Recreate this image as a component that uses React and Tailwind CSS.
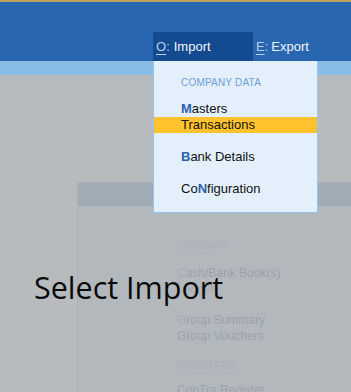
import React from "react";

export default function App() {
  return (
    <div
      className="relative w-[351px] h-[392px] overflow-hidden bg-[#b8bbbe] flex flex-col"
      style={{ fontFamily: '"Liberation Sans", Arial, sans-serif' }}
    >
      {/* top gold line */}
      <div className="h-[2px] shrink-0 bg-[#c0a35e]" />
      {/* header */}
      <div className="h-[59px] shrink-0 bg-[#2966b0] flex items-end pl-[153px]">
        <div className="w-[100px] h-[29px] bg-[#144a8f] flex items-center pl-[3px] text-[13px]">
          <span className="text-[#b8d0ec] underline underline-offset-[3px] decoration-[#b8d0ec]">O</span>
          <span className="text-[#b8d0ec]">:</span>
          <span className="text-[#f2f6fb] ml-[4px]">Import</span>
        </div>
        <div className="h-[29px] flex items-center pl-[3px] text-[13px]">
          <span className="text-[#b8d0ec] underline underline-offset-[3px] decoration-[#b8d0ec]">E</span>
          <span className="text-[#b8d0ec]">:</span>
          <span className="text-[#f2f6fb] ml-[3px]">Export</span>
        </div>
      </div>
      {/* light bar */}
      <div className="h-[14px] shrink-0 bg-[#89bde6]" />
      {/* background area */}
      <div className="flex-1 min-h-0 pt-[107px] pl-[77px]">
        <div className="h-[400px] border-l border-t border-[#aab2b9] bg-[#b3b8bd] flex flex-col">
          <div className="h-[23px] bg-[#a1acb7] shrink-0" />
          <div className="pl-[99px] pt-[33px] flex flex-col">
            <div className="h-[14px] leading-[14px] text-[10px] text-[#a9b1b8]">SUMMARY</div>
            <div className="mt-[12px] h-[16px] leading-[16px] text-[12px] text-[#9ba2a9]">
              <span className="text-[#a3adb8]">C</span>ash/Bank Book(s)
            </div>
            <div className="h-[16px] leading-[16px] text-[12px] text-[#a4abb2]">
              <span className="text-[#abb4be]">L</span>edger
            </div>
            <div className="mt-[15px] h-[16px] leading-[16px] text-[12px] text-[#9ba2a9]">
              <span className="text-[#a3adb8]">G</span>roup Summary
            </div>
            <div className="h-[16px] leading-[16px] text-[12px] text-[#9ba2a9]">
              Group <span className="text-[#97a6b8]">V</span>ouchers
            </div>
            <div className="mt-[15px] h-[14px] leading-[14px] text-[10px] text-[#a9b1b8]">REGISTERS</div>
            <div className="mt-[9px] h-[16px] leading-[16px] text-[12px] text-[#9ba2a9]">
              Con<span className="text-[#97a6b8]">T</span>ra Register
            </div>
          </div>
        </div>
      </div>

      {/* Select Import overlay text */}
      <div
        className="absolute left-[34px] top-[266px] text-[30.5px] leading-[42px] text-[#0a0a0a]"
        style={{ fontFamily: '"Open Sans", "Noto Sans", sans-serif' }}
      >
        Select Import
      </div>

      {/* dropdown */}
      <div className="absolute left-[153px] top-[61px] w-[165px] h-[152px] bg-[#e3f0fc] border border-t-0 border-[#94c4f0] flex flex-col pt-[15px]">
        <div className="pl-[27px] h-[14px] leading-[14px] text-[10px] text-[#6f9fd6] tracking-[0.2px]">COMPANY DATA</div>
        <div className="mt-[11px] pl-[27px] h-[16px] leading-[16px] text-[13px] text-[#111]">
          <span className="font-bold text-[#2c5fae]">M</span>asters
        </div>
        <div className="pl-[27px] h-[16px] leading-[16px] text-[13px] text-[#111] bg-[#fec22f]">Transactions</div>
        <div className="mt-[16px] pl-[27px] h-[16px] leading-[16px] text-[13px] text-[#111]">
          <span className="font-bold text-[#2c5fae]">B</span>ank Details
        </div>
        <div className="mt-[16px] pl-[27px] h-[16px] leading-[16px] text-[13px] text-[#111]">
          Co<span className="font-bold text-[#2c5fae]">N</span>figuration
        </div>
      </div>
    </div>
  );
}
